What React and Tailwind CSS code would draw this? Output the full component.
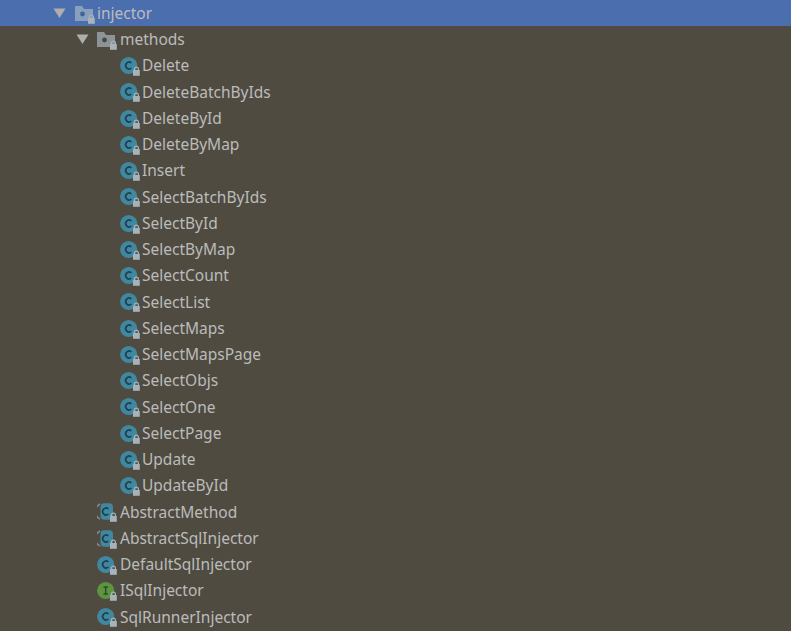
const methods = [
  'Delete', 'DeleteBatchByIds', 'DeleteById', 'DeleteByMap', 'Insert', 'SelectBatchByIds', 'SelectById',
  'SelectByMap', 'SelectCount', 'SelectList', 'SelectMaps', 'SelectMapsPage', 'SelectObjs', 'SelectOne',
  'SelectPage', 'Update', 'UpdateById',
]

const Lock = () => (
  <g>
    <path d="M14.4 15.5v-1.4a2 2 0 0 1 4 0v1.4" fill="none" stroke="#a9b2b8" strokeWidth="1.2" />
    <rect x="13" y="15" width="6.8" height="5.8" fill="#a9b2b8" />
  </g>
)

const Arrow = () => (
  <svg width="14" height="12" viewBox="0 0 14 12" className="shrink-0">
    <path d="M0.5 1.5h12L6.5 11z" fill="#aeaeaa" />
  </svg>
)

const Folder = ({ selected }) => (
  <svg width="21" height="21" viewBox="0 0 21 21" className="shrink-0">
    <path d="M0 3h7l2 3h9v12H0z" fill={selected ? '#88a0bd' : '#8e9496'} />
    <circle cx="7.5" cy="11" r="2.4" fill={selected ? '#3f6596' : '#45484a'} />
    <Lock />
  </svg>
)

const ClassIcon = ({ kind = 'class' }) => {
  const abstract = kind === 'abstract'
  const iface = kind === 'interface'
  return (
    <svg width="21" height="21" viewBox="0 0 21 21" className="shrink-0">
      {abstract && <path d="M3 3a8.5 8.5 0 0 0 0 15" fill="none" stroke="#85888a" strokeWidth="1.6" />}
      {abstract ? (
        <rect x="3.5" y="2.2" width="12.5" height="16.6" rx="4" fill="#40889f" />
      ) : (
        <circle cx="8.7" cy="10.5" r="8.6" fill={iface ? '#5c9440' : '#40889f'} />
      )}
      {iface ? (
        <path d="M6.5 7h4.5M6.5 14h4.5M8.7 7v7" stroke="#2f4b24" strokeWidth="1.4" fill="none" />
      ) : (
        <path d="M11.4 8a3.4 3.4 0 1 0 0 5" stroke="#1f3f50" strokeWidth="1.6" fill="none" />
      )}
      <Lock />
    </svg>
  )
}

const Row = ({ indent, selected, labelGap = 'ml-[1px]', children, label }) => (
  <div className={`flex items-center h-[26.26px] ${indent} ${selected ? 'bg-[#4b6eaf]' : ''}`}>
    {children}
    <span className={`text-[15.5px] text-[#bbbbbb] leading-none whitespace-nowrap pt-[1px] ${labelGap}`}>{label}</span>
  </div>
)

const App = () => {
  return (
    <div className="w-[791px] h-[631px] overflow-hidden bg-[#4f4b41] font-['Noto_Sans',sans-serif]">
      <Row indent="pl-[53px]" selected label="injector">
        <Arrow />
        <div className="ml-[8px]"><Folder selected /></div>
      </Row>
      <Row indent="pl-[76px]" labelGap="ml-[2px]" label="methods">
        <Arrow />
        <div className="ml-[7px]"><Folder /></div>
      </Row>
      {methods.map(m => (
        <Row key={m} indent="pl-[120px]" label={m}>
          <ClassIcon />
        </Row>
      ))}
      <Row indent="pl-[97px]" labelGap="ml-[2px]" label="AbstractMethod"><ClassIcon kind="abstract" /></Row>
      <Row indent="pl-[97px]" labelGap="ml-[2px]" label="AbstractSqlInjector"><ClassIcon kind="abstract" /></Row>
      <Row indent="pl-[97px]" labelGap="ml-[2px]" label="DefaultSqlInjector"><ClassIcon /></Row>
      <Row indent="pl-[97px]" labelGap="ml-[2px]" label="ISqlInjector"><ClassIcon kind="interface" /></Row>
      <Row indent="pl-[97px]" labelGap="ml-[2px]" label="SqlRunnerInjector"><ClassIcon /></Row>
    </div>
  )
}

export default App
